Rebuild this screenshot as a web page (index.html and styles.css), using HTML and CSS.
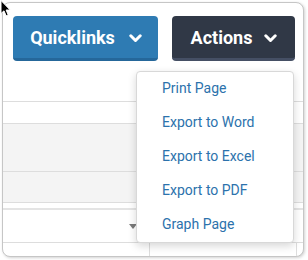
FILE: index.html
```html
<!DOCTYPE html>
<html lang="en">
<head>
  <meta charset="UTF-8" />
  <meta name="viewport" content="width=device-width, initial-scale=1.0" />
  <title>Actions menu</title>
  <link rel="stylesheet" href="styles.css">
</head>
<body>
  <div class="window">
    <div class="toolbar">
      <button class="btn quicklinks">Quicklinks
        <svg class="chev" width="13" height="9" viewBox="0 0 13 9"><path d="M1.8 1.8 L6.5 6.5 L11.2 1.8" fill="none" stroke="#fff" stroke-width="3" stroke-linecap="round" stroke-linejoin="round"/></svg>
      </button>
      <button class="btn actions">Actions
        <svg class="chev" width="13" height="9" viewBox="0 0 13 9"><path d="M1.8 1.8 L6.5 6.5 L11.2 1.8" fill="none" stroke="#fff" stroke-width="3" stroke-linecap="round" stroke-linejoin="round"/></svg>
      </button>
    </div>

    <div class="row top"></div>
    <div class="row thin"></div>
    <div class="row alt tall"></div>
    <div class="row alt mid"></div>
    <div class="row gap"></div>
    <div class="row select">
      <div class="select-cell"><span class="caret"></span></div>
    </div>
    <div class="row foot">
      <div class="foot-cell"></div>
      <div class="foot-cell"></div>
    </div>

    <ul class="menu">
      <li><a href="#">Print Page</a></li>
      <li><a href="#">Export to Word</a></li>
      <li><a href="#">Export to Excel</a></li>
      <li><a href="#">Export to PDF</a></li>
      <li><a href="#">Graph Page</a></li>
    </ul>
  </div>

  <svg class="cursor" width="12" height="17" viewBox="0 0 12 17">
    <path d="M1 0.5 L1 13.5 L4 10.8 L6.1 15.8 L8.2 14.9 L6.1 10 L10.2 10 Z" fill="#000" stroke="#fff" stroke-width="1"/>
  </svg>
</body>
</html>
```

FILE: styles.css
```css
body {
  margin: 0;
  width: 308px;
  height: 260px;
  background: #ffffff;
  font-family: Roboto, "Liberation Sans", Arial, sans-serif;
  overflow: hidden;
  position: relative;
}
.window {
  position: relative;
  margin: 2px 0 0 2px;
  width: 300px;
  height: 253px;
  border: 1px solid #c6c6c6;
  border-radius: 8px;
  box-shadow: 1px 1px 3px rgba(0, 0, 0, 0.18);
  overflow: hidden;
  background: #ffffff;
}
.toolbar {
  display: flex;
  gap: 14px;
  padding: 13px 0 0 10px;
  height: 45px;
}
.btn {
  display: flex;
  align-items: center;
  justify-content: center;
  gap: 14px;
  height: 45px;
  padding: 0 0 0 1px;
  border: none;
  border-radius: 4px;
  font-family: Roboto, "Liberation Sans", Arial, sans-serif;
  font-size: 18px;
  font-weight: bold;
  color: #ffffff;
  cursor: pointer;
}
.quicklinks {
  width: 145px;
  background: #2e7bb3;
  border-bottom: 3px solid #25679a;
}
.actions {
  width: 123px;
  gap: 12px;
  background: #303846;
  border-bottom: 3px solid #454f64;
}
.chev {
  margin-top: 2px;
}
.row {
  border-bottom: 1px solid #dddddd;
}
.top {
  height: 40px;
}
.thin {
  height: 21px;
}
.alt {
  background: #f4f4f4;
}
.tall {
  height: 47px;
}
.mid {
  height: 30px;
}
.gap {
  height: 5px;
  border-bottom: 2px solid #e4e4e4;
}
.select {
  height: 32px;
  display: flex;
}
.select-cell {
  width: 134px;
  display: flex;
  align-items: center;
  justify-content: flex-end;
}
.caret {
  width: 0;
  height: 0;
  border-left: 4px solid transparent;
  border-right: 4px solid transparent;
  border-top: 5px solid #7a7a7a;
}
.foot {
  display: flex;
  height: 20px;
  border-bottom: none;
}
.foot-cell {
  width: 146px;
  border-right: 1px solid #dddddd;
}
.menu {
  position: absolute;
  left: 133px;
  top: 68px;
  width: 156px;
  margin: 0;
  padding: 0;
  list-style: none;
  background: #ffffff;
  border: 1px solid #d8d8d8;
  border-radius: 4px;
  box-shadow: 0 3px 8px rgba(0, 0, 0, 0.16);
}
.menu li {
  height: 34px;
  line-height: 33px;
}
.menu a {
  display: block;
  padding-left: 25px;
  font-size: 14px;
  color: #2c72ac;
  text-decoration: none;
}
.cursor {
  position: absolute;
  left: 0;
  top: 0;
}
```
